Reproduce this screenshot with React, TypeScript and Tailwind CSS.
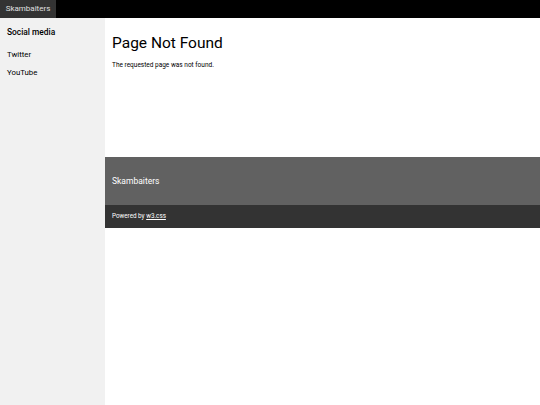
import React from "react";

export default function App() {
  return (
    <div className="min-h-[405px] w-[540px] flex flex-col bg-white text-black" style={{ fontFamily: "Roboto, 'Liberation Sans', sans-serif" }}>
      <div className="h-[18px] bg-black flex">
        <div className="h-full w-[56px] bg-[#333] text-[#e0e0e0] text-[8px] flex items-center justify-center">Skambaiters</div>
      </div>
      <div className="flex flex-1">
        <div className="w-[105px] bg-[#f1f1f1] min-h-[387px] flex flex-col">
          <div className="pl-[7px] pt-[8px] text-[8.4px] font-medium h-[28px]">Social media</div>
          <div className="pl-[7px] text-[7.8px] h-[18px] flex items-center">Twitter</div>
          <div className="pl-[7px] text-[7.8px] h-[18px] flex items-center">YouTube</div>
        </div>
        <div className="flex-1 flex flex-col">
          <div className="h-[139px] px-[7px]">
            <h1 className="text-[15.5px] leading-none pt-[18px] font-normal">Page Not Found</h1>
            <p className="text-[6.5px] mt-[9px]">The requested page was not found.</p>
          </div>
          <div className="h-[48px] bg-[#616161] text-white text-[8.5px] px-[7px] flex items-center">Skambaiters</div>
          <div className="h-[23px] bg-[#333] text-white text-[6.3px] px-[7px] flex items-center">
            <span>Powered by <span className="underline">w3.css</span></span>
          </div>
        </div>
      </div>
    </div>
  );
}
